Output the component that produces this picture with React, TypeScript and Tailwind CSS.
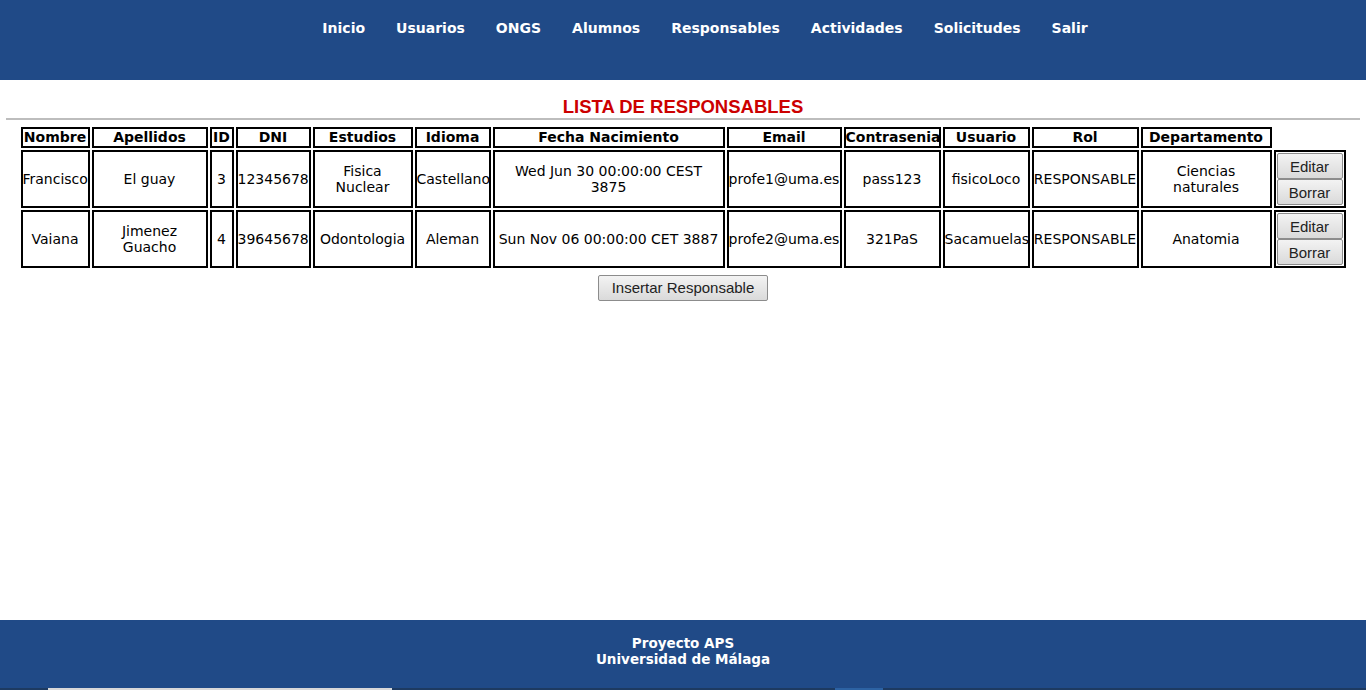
import React from 'react';

const nav = ['Inicio', 'Usuarios', 'ONGS', 'Alumnos', 'Responsables', 'Actividades', 'Solicitudes', 'Salir'];

const cols: [string, number][] = [
  ['Nombre', 69],
  ['Apellidos', 116],
  ['ID', 24],
  ['DNI', 75],
  ['Estudios', 100],
  ['Idioma', 76],
  ['Fecha Nacimiento', 232],
  ['Email', 115],
  ['Contrasenia', 97],
  ['Usuario', 87],
  ['Rol', 107],
  ['Departamento', 131],
];

const rows = [
  ['Francisco', 'El guay', '3', '12345678', 'Fisica Nuclear', 'Castellano', 'Wed Jun 30 00:00:00 CEST 3875', 'profe1@uma.es', 'pass123', 'fisicoLoco', 'RESPONSABLE', 'Ciencias naturales'],
  ['Vaiana', 'Jimenez Guacho', '4', '39645678', 'Odontologia', 'Aleman', 'Sun Nov 06 00:00:00 CET 3887', 'profe2@uma.es', '321PaS', 'Sacamuelas', 'RESPONSABLE', 'Anatomia'],
];

const btn =
  "block w-full h-[26px] border border-[#8c8c8c] rounded-[2px] bg-gradient-to-b from-[#f3f3f3] to-[#dadada] text-[15px] text-[#222] font-['Liberation_Sans',Arial,sans-serif] leading-none";

export default function App() {
  return (
    <div className="h-[690px] flex flex-col bg-white font-['DejaVu_Sans',Verdana,sans-serif] text-black">
      <header className="h-[80px] bg-[#204a87] pt-[20px]">
        <ul className="flex justify-center gap-[31px] pl-[44px]">
          {nav.map((n) => (
            <li key={n} className="text-[14px] font-bold text-white leading-[17px]">
              {n}
            </li>
          ))}
        </ul>
      </header>

      <main className="flex-1 pt-[16px]">
        <h2 className="text-center text-[18.5px] leading-[22px] font-bold text-[#cc0000] font-['Liberation_Sans',Arial,sans-serif]">
          LISTA DE RESPONSABLES
        </h2>
        <hr className="mx-[6px] border-0 border-t-2 border-[#bdbdbd]" />
        <table className="mx-auto mt-[5px] w-[1329px] table-fixed border-separate border-spacing-[2px] text-[14px]">
          <thead>
            <tr>
              {cols.map(([c, w]) => (
                <th key={c} style={{ width: w }} className="border-2 border-black p-0 leading-[17px] font-bold whitespace-nowrap">
                  {c}
                </th>
              ))}
            </tr>
          </thead>
          <tbody>
            {rows.map((r, i) => (
              <tr key={i}>
                {r.map((v, j) => (
                  <td key={j} className="border-2 border-black p-0 text-center align-middle leading-[16px]">
                    {j === 6 ? <span className="inline-block max-w-[222px]">{v}</span> : v}
                  </td>
                ))}
                <td className="border-2 border-black p-[1px]">
                  <button className={btn}>Editar</button>
                  <button className={btn}>Borrar</button>
                </td>
              </tr>
            ))}
          </tbody>
        </table>
        <div className="flex justify-center mt-[5px]">
          <button className="h-[26px] w-[170px] border border-[#8c8c8c] rounded-[2px] bg-gradient-to-b from-[#f3f3f3] to-[#dadada] text-[15px] text-[#222] font-['Liberation_Sans',Arial,sans-serif]">
            Insertar Responsable
          </button>
        </div>
      </main>

      <footer className="h-[68px] bg-[#204a87] pt-[15px] text-center text-white text-[13.5px] font-bold leading-[16px]">
        <p>Proyecto APS</p>
        <p>Universidad de Málaga</p>
      </footer>
      <div className="h-[2px] flex bg-[#1d3a61]">
        <div className="ml-[48px] w-[344px] bg-[#d8d8d8]" />
        <div className="ml-[443px] w-[48px] bg-[#2c62a3]" />
      </div>
    </div>
  );
}
